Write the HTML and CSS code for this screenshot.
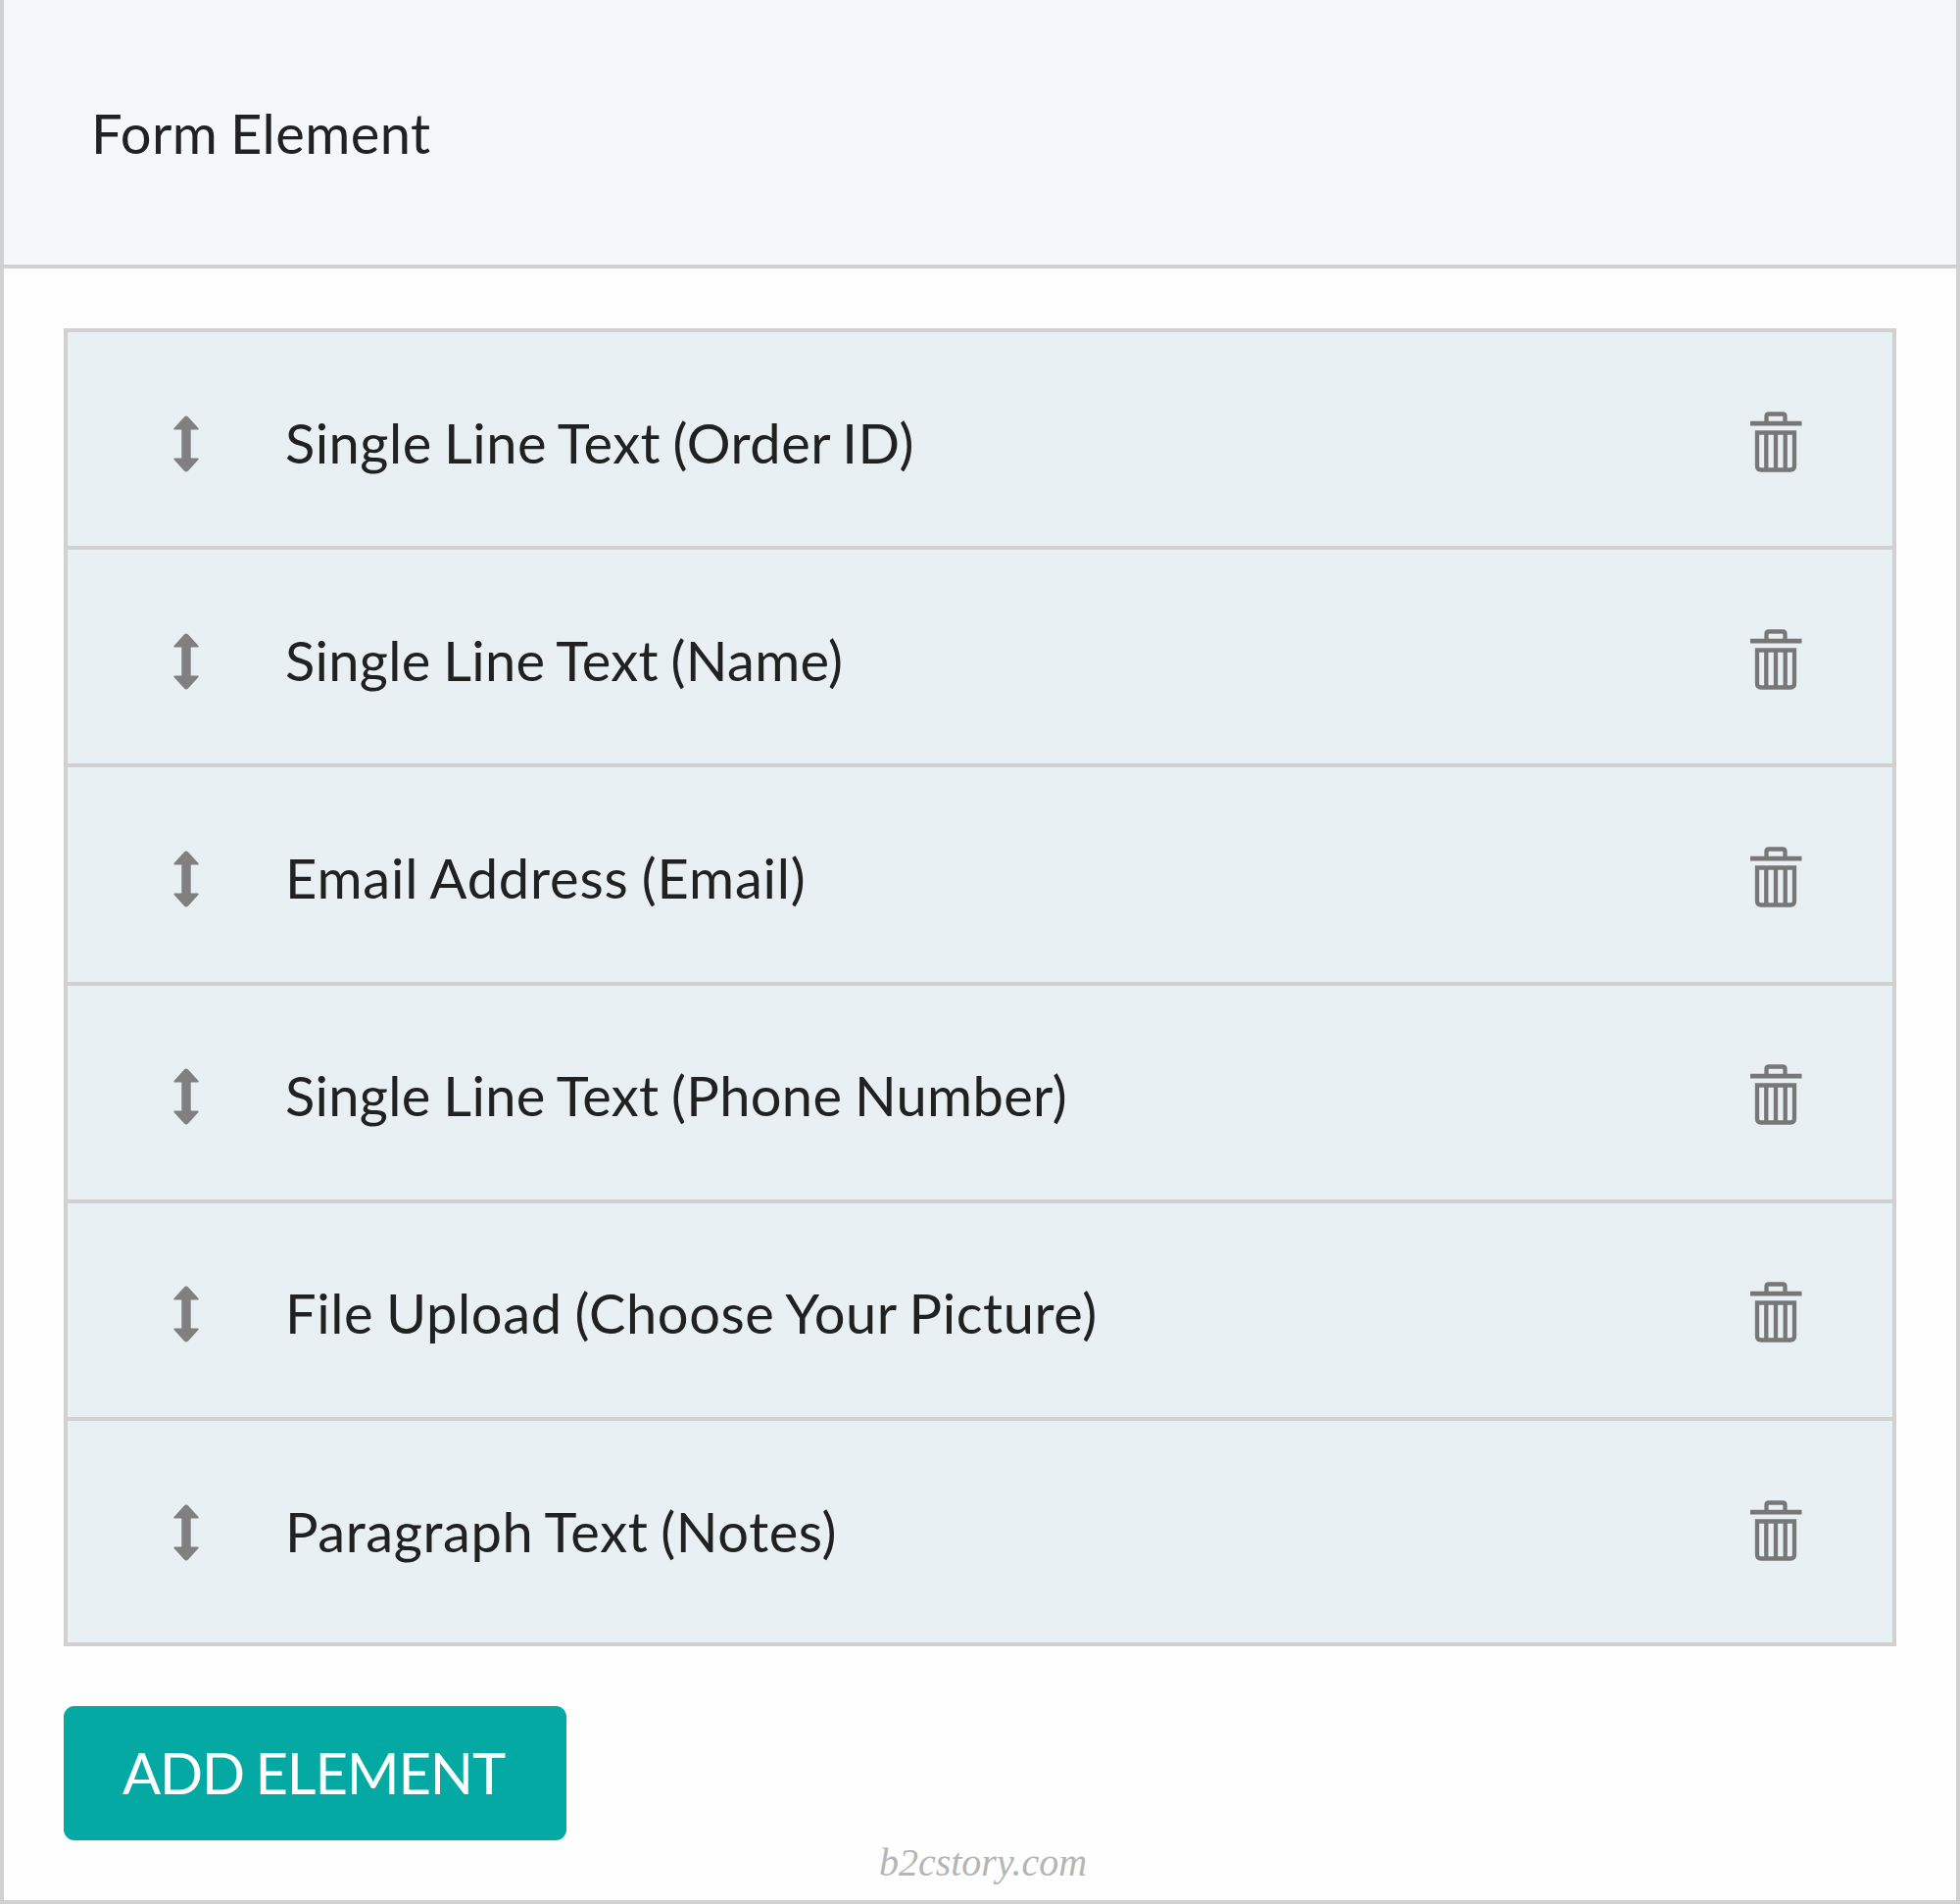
FILE: index.html
```html
<!DOCTYPE html>
<html lang="en">
<head>
<meta charset="utf-8">
<title>Form Element</title>
<link rel="stylesheet" href="styles.css">
</head>
<body>
<svg class="sprite" aria-hidden="true">
  <symbol id="move" viewBox="0 0 26 58">
    <path d="M13 .5Q14 .5 15 1.5L25.5 13Q26 14.500 24.500 14.500H17.700V43.500H24.500Q26 43.500 25.500 45L15 56.500Q13 58.500 11 56.500L.5 45Q0 43.500 1.500 43.500H8.300V14.500H1.500Q0 14.500 .5 13L11 1.500Q12 .5 13 .5Z" fill="currentColor"/>
  </symbol>
  <symbol id="trash" viewBox="0 0 53 62">
    <path d="M16.500 12V5Q16.500 2.500 19 2.500H33Q35.500 2.500 35.500 5V12M7 21.500H45V55.500Q45 59.500 41 59.500H11Q7 59.500 7 55.500ZM16.300 21V59M26 21V59M35.700 21V59" fill="none" stroke="currentColor" stroke-width="4.300"/>
    <path d="M0 12.200H52.500" stroke="currentColor" stroke-width="4.800"/>
  </symbol>
</svg>
<main class="panel">
  <header class="panel-header"><h1 class="title">Form Element</h1></header>
  <section class="panel-body">
    <ul class="elements">
      <li class="element"><svg class="move"><use href="#move"/></svg><span class="label label-order">Single Line Text (Order ID)</span><svg class="trash"><use href="#trash"/></svg></li>
      <li class="element"><svg class="move"><use href="#move"/></svg><span class="label label-name">Single Line Text (Name)</span><svg class="trash"><use href="#trash"/></svg></li>
      <li class="element"><svg class="move"><use href="#move"/></svg><span class="label label-email">Email Address (Email)</span><svg class="trash"><use href="#trash"/></svg></li>
      <li class="element"><svg class="move"><use href="#move"/></svg><span class="label label-phone">Single Line Text (Phone Number)</span><svg class="trash"><use href="#trash"/></svg></li>
      <li class="element"><svg class="move"><use href="#move"/></svg><span class="label label-file">File Upload (Choose Your Picture)</span><svg class="trash"><use href="#trash"/></svg></li>
      <li class="element"><svg class="move"><use href="#move"/></svg><span class="label label-notes">Paragraph Text (Notes)</span><svg class="trash"><use href="#trash"/></svg></li>
    </ul>
    <button class="add" type="button">ADD ELEMENT</button>
  </section>
  <footer class="credit">b2cstory.com</footer>
</main>
</body>
</html>
```
FILE: styles.css
```css
* { box-sizing: border-box; }
body { margin: 0; font-family: Lato, sans-serif; color: #212121; background: #fff; }
.sprite { display: none; }
.panel {
  height: 1943px;
  display: flex;
  flex-direction: column;
  border: 4px solid #d1d1d1;
  border-top: 0;
  background: #fefefe;
}
.panel-header {
  height: 274px;
  padding: 102px 89px 0;
  border-bottom: 4px solid #d1d1d1;
  background: #f4f8fb;
}
.title { margin: 0; font-size: 56px; line-height: 67px; font-weight: 400; letter-spacing: .45px; word-spacing: -2px; }
.panel-body { padding: 61px 61px 0; }
.elements {
  list-style: none;
  margin: 0 0 61px;
  padding: 0;
  height: 1345px;
  border: 4px solid #d1d1d1;
  background: #e8f0f4;
}
.element {
  height: 222.200px;
  padding: 0 92px 0 108px;
  display: flex;
  align-items: center;
  border-bottom: 4px solid #d1d1d1;
}
.element:last-child { border-bottom-color: transparent; }
.move { width: 26px; height: 58px; margin-top: 9px; color: #808080; }
.label { flex: 1; margin: 6px 0 0 88px; font-size: 56px; line-height: 67px; word-spacing: -2px; }
.label-order { letter-spacing: .5px; word-spacing: -2.500px; }
.label-name { letter-spacing: .3px; }
.label-email { letter-spacing: .83px; }
.label-phone { letter-spacing: .33px; }
.label-file { letter-spacing: .6px; }
.label-notes { letter-spacing: .6px; }
.trash { width: 53px; height: 62px; margin-top: 5px; color: #777; }
.add {
  display: block;
  width: 513px;
  height: 137px;
  padding: 0 3px 2px 0;
  border: 0;
  border-radius: 11px;
  background: #03a9a2;
  color: #fff;
  font: 400 58px/135px Lato, sans-serif;
  letter-spacing: -1.15px;
  word-spacing: -2.200px;
}
.credit {
  padding-left: 6px;
  text-align: center;
  font: italic 40px/46px "Liberation Serif", serif;
  color: #b5b5b5;
}
```
